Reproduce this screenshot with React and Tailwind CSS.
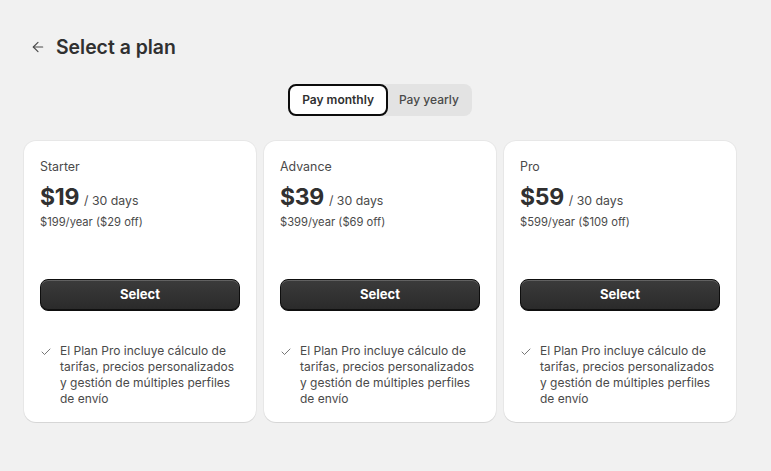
import { ArrowLeft, Check } from 'lucide-react'

const PLANS = [
  { name: 'Starter', price: '$19', yearly: '$199/year ($29 off)' },
  { name: 'Advance', price: '$39', yearly: '$399/year ($69 off)' },
  { name: 'Pro', price: '$59', yearly: '$599/year ($109 off)' },
]

function PlanCard({ plan }) {
  return (
    <div className="flex flex-col rounded-xl bg-white px-4 pt-[16px] pb-[15px] shadow-[0_1px_0_rgba(0,0,0,0.07),0_0_0_1px_rgba(0,0,0,0.04)]">
      <p className="text-[12.4px] leading-5 text-[#4a4a4a]">{plan.name}</p>
      <div className="mt-[6px] flex items-baseline gap-[5px]">
        <span className="text-[23px] font-bold leading-7 tracking-[-0.3px] text-[#303030]">{plan.price}</span>
        <span className="text-[12.3px] text-[#4a4a4a]">/ 30 days</span>
      </div>
      <p className="mt-[3px] text-[11.2px] leading-4 text-[#4a4a4a]">{plan.yearly}</p>

      <button className="mt-[49px] h-8 w-full rounded-lg border border-[#0e0e0e] bg-gradient-to-b from-[#3b3b3b] to-[#2a2a2a] text-[13px] font-bold text-white shadow-[inset_0_1px_0_rgba(255,255,255,0.2),inset_0_-1px_0_rgba(0,0,0,0.6)]">
        Select
      </button>

      <div className="mt-[32px] flex gap-2">
        <Check size={12} strokeWidth={1.5} className="mt-[3px] shrink-0 text-[#4a4a4a]" />
        <p className="text-[12px] leading-4 text-[#4a4a4a]">
          El Plan Pro incluye cálculo de tarifas, precios personalizados y gestión de múltiples perfiles de envío
        </p>
      </div>
    </div>
  )
}

export default function App() {
  return (
    <div className="min-h-[471px] bg-[#f1f1f1] font-['Inter',sans-serif] text-[#303030]">
      <div className="w-[712px] ml-6 pt-[33px]">
        <div className="flex items-center gap-[10px]">
          <ArrowLeft size={16} strokeWidth={1.75} className="ml-[6px] text-[#4a4a4a]" />
          <h1 className="text-[19.4px] font-semibold leading-7 text-[#303030]">Select a plan</h1>
        </div>

        <div className="mt-[23px] flex justify-center">
          <div className="flex rounded-lg bg-[#e3e3e3] ">
            <button className="h-8 rounded-lg border-2 border-[#0c0c0c] bg-white px-3 text-[12px] font-semibold text-[#303030]">
              Pay monthly
            </button>
            <button className="h-8 pl-[11px] pr-[13px] text-[12px] font-medium text-[#4a4a4a]">Pay yearly</button>
          </div>
        </div>

        <div className="mt-[25px] grid grid-cols-3 gap-2">
          {PLANS.map(p => (
            <PlanCard key={p.name} plan={p} />
          ))}
        </div>
      </div>
    </div>
  )
}
